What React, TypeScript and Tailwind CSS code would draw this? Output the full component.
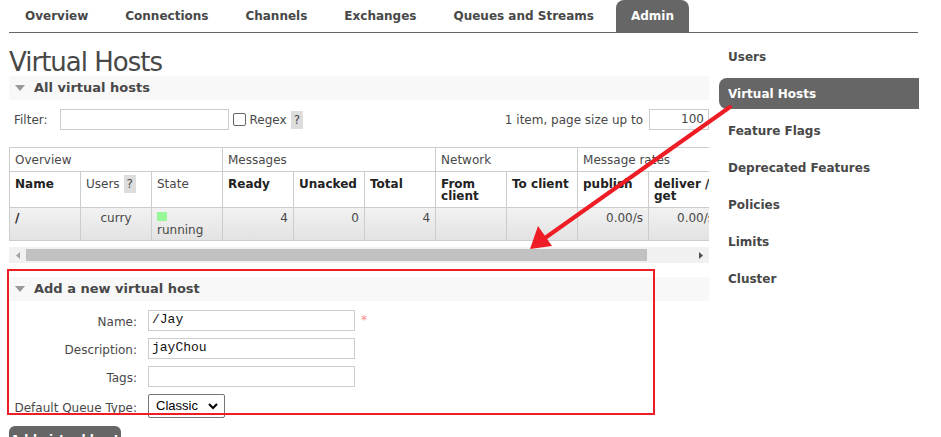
import React from 'react';

const font = { fontFamily: '"DejaVu Sans", Verdana, sans-serif' };

function Help() {
  return (
    <span className="ml-[4px] inline-block bg-[#ddd] px-[3px] leading-[18px] text-[#484848]">?</span>
  );
}

function Triangle() {
  return (
    <svg width="10" height="6" viewBox="0 0 10 6" className="mr-[9px]">
      <path d="M0 0 L10 0 L5 6 Z" fill="#999" />
    </svg>
  );
}

export default function App() {
  const tabs = ['Overview', 'Connections', 'Channels', 'Exchanges', 'Queues and Streams', 'Admin'];
  const side = ['Users', 'Virtual Hosts', 'Feature Flags', 'Deprecated Features', 'Policies', 'Limits', 'Cluster'];
  const th = 'border border-[#ccc] px-[5px] text-left align-top';
  const th1 = 'border border-[#ccc] px-[5px] text-left align-middle font-normal';
  const td = 'border border-[#ccc] px-[5px] pt-[3px] leading-[14px]';

  return (
    <div className="relative h-[437px] w-[941px] overflow-hidden bg-white text-[12px] text-[#484848]" style={font}>
      {/* tabs */}
      <div className="mx-[9px] flex h-[33px] w-[909px] items-end gap-[7px] border-b border-[#666] pl-[1px]">
        {tabs.map((t) => (
          <div
            key={t}
            className={
              'flex h-[32px] items-center px-[15px] font-bold ' +
              (t === 'Admin' ? 'rounded-t-[8px] bg-[#666] px-[14px] text-white' : 'text-[#484848]')
            }
          >
            {t}
          </div>
        ))}
      </div>

      <div className="flex">
        <div className="relative ml-[9px] w-[700px]">
          <h1 className="mt-[14px] h-[29px] text-[26px] leading-[30px] tracking-[-1px] text-[#484848]">Virtual Hosts</h1>

          <div className="flex h-[24px] items-center bg-[#f8f8f8] pl-[6px] text-[13px] font-bold">
            <Triangle />
            All virtual hosts
          </div>

          <div className="mt-[9px] flex h-[21px] items-center">
            <span className="ml-[5px]">Filter:</span>
            <div className="ml-[12px] h-[21px] w-[169px] border border-[#ccc]" />
            <div className="ml-[4px] h-[13px] w-[13px] rounded-[2px] border border-[#666]" />
            <span className="ml-[4px]">Regex</span>
            <Help />
            <span className="ml-auto">1 item, page size up to</span>
            <div className="ml-[6px] h-[21px] w-[60px] border border-[#ccc] pr-[4px] text-right leading-[19px]">100</div>
          </div>

          <div className="mt-[17px] w-[700px] overflow-hidden">
            <table className="w-[852px] table-fixed border-collapse">
              <colgroup>
                {Array.from({ length: 12 }).map((_, i) => (
                  <col key={i} className="w-[71px]" />
                ))}
              </colgroup>
              <thead>
                <tr className="h-[24px]">
                  <th colSpan={3} className={th1}>Overview</th>
                  <th colSpan={3} className={th1}>Messages</th>
                  <th colSpan={2} className={th1}>Network</th>
                  <th colSpan={4} className={th1}>Message rates</th>
                </tr>
                <tr className="h-[36px] leading-[12px]">
                  <th className={th + ' pt-[6px] text-[#222]'}>Name</th>
                  <th className={th + ' pt-[3px] font-normal'}>Users<Help /></th>
                  <th className={th + ' pt-[6px] font-normal'}>State</th>
                  <th className={th + ' pt-[6px] text-[#222]'}>Ready</th>
                  <th className={th + ' pt-[6px] text-[#222]'}>Unacked</th>
                  <th className={th + ' pt-[6px] text-[#222]'}>Total</th>
                  <th className={th + ' pt-[6px] text-[#222]'}>From client</th>
                  <th className={th + ' pt-[6px] text-[#222]'}>To client</th>
                  <th className={th + ' pt-[6px] text-[#222]'}>publish</th>
                  <th className={th + ' pt-[6px] text-[#222]'}>deliver / get</th>
                  <th className={th + ' pt-[6px] text-[#222]'}>redeliver</th>
                  <th className={th + ' pt-[6px] text-[#222]'}>ack</th>
                </tr>
              </thead>
              <tbody>
                <tr className="h-[33px] bg-gradient-to-b from-[#f2f2f2] to-[#e2e2e2] align-top">
                  <td className={td + ' font-bold text-[#222]'}>/</td>
                  <td className={td + ' text-center'}>curry</td>
                  <td className="border border-[#ccc] px-[5px] pt-[4px] leading-[16px]">
                    <div className="mb-[1px] h-[9px] w-[10px] bg-[#98f898]" />
                    running
                  </td>
                  <td className={td + ' text-right'}>4</td>
                  <td className={td + ' text-right'}>0</td>
                  <td className={td + ' text-right'}>4</td>
                  <td className="border border-[#ccc]" />
                  <td className="border border-[#ccc]" />
                  <td className={td + ' text-right'}>0.00/s</td>
                  <td className={td + ' text-right'}>0.00/s</td>
                  <td className={td + ' text-right'}>0.00/s</td>
                  <td className={td + ' text-right'}>0.00/s</td>
                </tr>
              </tbody>
            </table>
          </div>

          {/* scrollbar */}
          <div className="mt-[6px] flex h-[16px] items-center bg-[#f1f1f1]">
            <div className="flex w-[17px] justify-center">
              <svg width="4" height="7" viewBox="0 0 4 7"><path d="M4 0 L0 3.5 L4 7 Z" fill="#a3a3a3" /></svg>
            </div>
            <div className="h-[12px] w-[621px] bg-[#c1c1c1]" />
            <div className="ml-auto flex w-[17px] justify-center">
              <svg width="4" height="7" viewBox="0 0 4 7"><path d="M0 0 L4 3.5 L0 7 Z" fill="#505050" /></svg>
            </div>
          </div>

          <div className="mt-[14px] flex h-[24px] items-center bg-[#f8f8f8] pl-[6px] text-[13px] font-bold">
            <Triangle />
            Add a new virtual host
          </div>

          <div className="mt-[9px] flex flex-col gap-[7px]">
            {[
              ['Name:', '/Jay', true],
              ['Description:', 'jayChou', false],
              ['Tags:', '', false],
            ].map(([label, value, req]) => (
              <div key={label as string} className="flex h-[21px]">
                <span className="w-[128px] self-end text-right leading-[17px]">{label}</span>
                <div
                  className="ml-[11px] h-[21px] w-[207px] border border-[#ccc] pl-[3px] text-[13px] leading-[18px] text-[#111]"
                  style={{ fontFamily: '"Liberation Mono", monospace' }}
                >
                  {value}
                </div>
                {req && <span className="ml-[6px] mt-[4px] text-[12px] leading-[12px] text-[#f88]">*</span>}
              </div>
            ))}
            <div className="flex h-[24px] items-center">
              <span className="w-[128px] pt-[3px] text-right">Default Queue Type:</span>
              <div
                className="ml-[11px] flex h-[24px] w-[77px] items-center rounded-[2px] border border-[#767676] pl-[7px] text-[13px] text-black"
                style={{ fontFamily: '"Liberation Sans", Arial, sans-serif' }}
              >
                Classic
                <svg width="10" height="7" viewBox="0 0 10 7" className="ml-auto mr-[6px]">
                  <path d="M1 1 L5 5 L9 1" stroke="#000" strokeWidth="2" fill="none" />
                </svg>
              </div>
            </div>
          </div>

          <div className="mt-[8px] h-[30px] w-[112px] rounded-t-[6px] bg-[#666] pt-[7px] text-center font-bold leading-[14px] text-white">
            Add virtual host
          </div>

          {/* annotation box */}
          <div className="absolute left-[-2px] top-[236px] h-[146px] w-[648px] border-2 border-[#ee1c25]" />
        </div>

        <div className="ml-[10px] mt-[8px] w-[200px]">
          {side.map((s) => (
            <div
              key={s}
              className={
                'mb-[6px] flex h-[31px] items-center pl-[9px] font-bold ' +
                (s === 'Virtual Hosts' ? 'rounded-l-[8px] bg-[#666] text-white' : 'text-[#484848]')
              }
            >
              {s}
            </div>
          ))}
        </div>
      </div>

      {/* annotation arrow */}
      <svg className="pointer-events-none absolute left-0 top-0" width="941" height="437">
        <line x1="730" y1="107" x2="545" y2="238" stroke="#ee1c25" strokeWidth="4" strokeLinecap="round" />
        <path d="M530 249 L538 226 L552 246 Z" fill="#ee1c25" />
      </svg>
    </div>
  );
}
